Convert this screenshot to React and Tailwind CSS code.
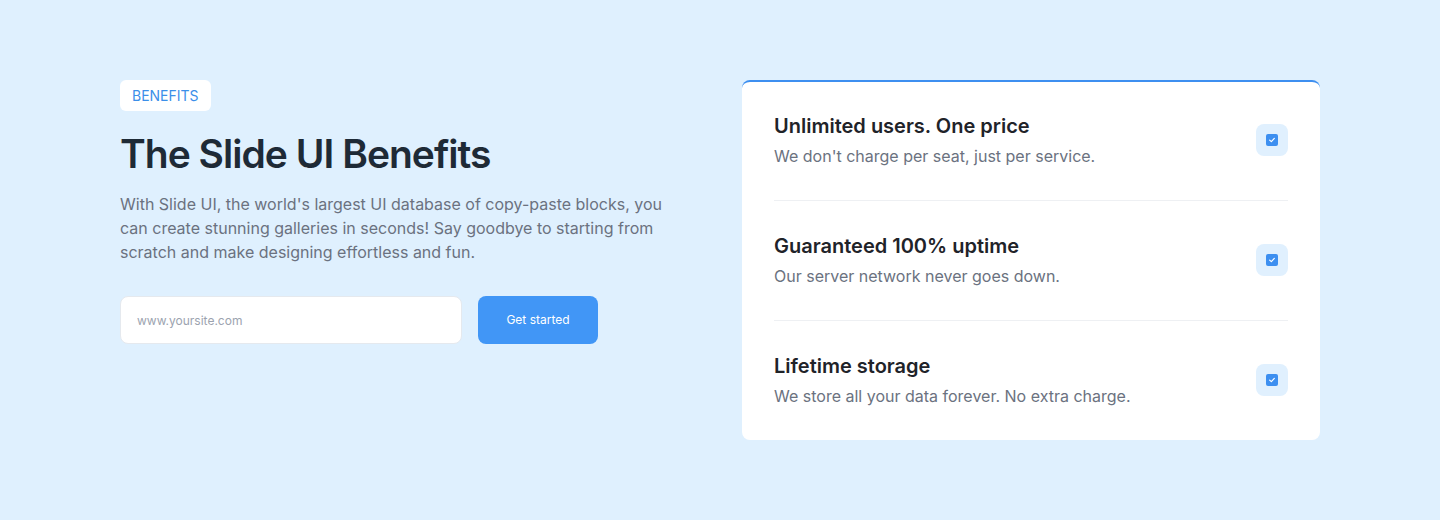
import React from "react";

const benefits = [
  { title: "Unlimited users. One price", text: "We don't charge per seat, just per service." },
  { title: "Guaranteed 100% uptime", text: "Our server network never goes down." },
  { title: "Lifetime storage", text: "We store all your data forever. No extra charge." },
];

function CheckBadge() {
  return (
    <div className="flex h-8 w-8 shrink-0 items-center justify-center rounded-lg bg-[#e0f0fe]">
      <div className="flex h-3 w-3 items-center justify-center rounded-[2px] bg-[#3d8ff0]">
        <svg viewBox="0 0 12 12" className="h-2 w-2" fill="none" stroke="white" strokeWidth="1.8" strokeLinecap="round" strokeLinejoin="round">
          <path d="M2.5 6.2 5 8.5l4.5-5" />
        </svg>
      </div>
    </div>
  );
}

export default function App() {
  return (
    <div className="min-h-[520px] w-full bg-[#dff0fe] font-['Inter','Liberation_Sans',sans-serif]">
      <div className="mx-auto flex w-[1200px] items-start justify-between py-20">
        <div className="w-[560px]">
          <span className="inline-flex h-[31px] items-center rounded-md bg-white px-3 text-sm text-[#3b8fe9]">
            BENEFITS
          </span>
          <h1 className="mt-[19px] text-[39px] leading-[48px] font-semibold tracking-tight text-[#1e2a36]">
            The Slide UI Benefits
          </h1>
          <p className="mt-[14px] text-base leading-6 text-[#6b7280]">
            With Slide UI, the world's largest UI database of copy-paste blocks, you can create stunning galleries in seconds! Say goodbye to starting from scratch and make designing effortless and fun.
          </p>
          <div className="mt-8 flex gap-4">
            <input
              type="text"
              placeholder="www.yoursite.com"
              className="h-12 w-[342px] rounded-lg border border-[#e5e9ee] bg-white px-4 text-xs text-gray-700 placeholder:text-[#9ca3af] outline-none"
            />
            <button className="h-12 w-[120px] rounded-lg bg-[#4196f6] text-xs text-white">
              Get started
            </button>
          </div>
        </div>
        <div className="w-[578px] rounded-lg border-t-2 border-[#3d8ff0] bg-white px-8 pt-[30px] pb-8">
          {benefits.map((b, i) => (
            <div
              key={b.title}
              className={`flex items-center justify-between ${i > 0 ? "border-t border-[#eef0f3] pt-[31px]" : ""} ${i < benefits.length - 1 ? "pb-8" : ""}`}
            >
              <div>
                <h3 className="text-xl leading-7 font-semibold text-[#1f2329]">{b.title}</h3>
                <p className="mt-1 text-base leading-6 text-[#6b7280]">{b.text}</p>
              </div>
              <CheckBadge />
            </div>
          ))}
        </div>
      </div>
    </div>
  );
}
